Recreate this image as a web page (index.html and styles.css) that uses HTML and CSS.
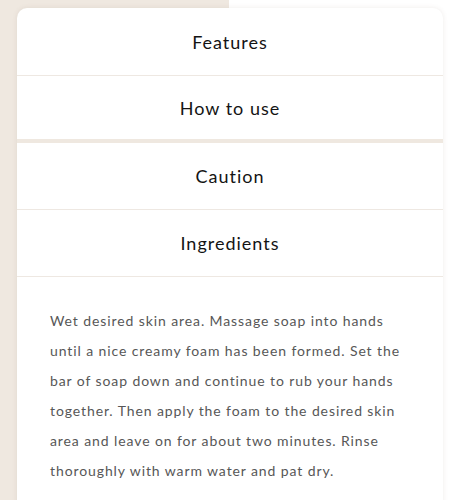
FILE: index.html
```html
<!DOCTYPE html>
<html lang="en">
<head>
<meta charset="utf-8">
<title>Product details</title>
<link rel="stylesheet" href="styles.css">
</head>
<body>
<div class="page">
  <section class="card">
    <div class="tab">Features</div>
    <div class="tab tab-break">How to use</div>
    <div class="tab">Caution</div>
    <div class="tab">Ingredients</div>
    <div class="panel">
      <p>Wet desired skin area. Massage soap into hands until a nice creamy foam has been formed. Set the bar of soap down and continue to rub your hands together. Then apply the foam to the desired skin area and leave on for about two minutes. Rinse thoroughly with warm water and pat dry.</p>
    </div>
  </section>
</div>
</body>
</html>
```
FILE: styles.css
```css
html, body {
  margin: 0;
  padding: 0;
  overflow: hidden;
}
body {
  background: linear-gradient(to right, #efe8e0 0, #efe8e0 229px, #ffffff 229px);
  height: 500px;
  font-family: "Lato", "Liberation Sans", sans-serif;
}
.page {
  padding: 8px 16px 0 17px;
}
.card {
  background: #ffffff;
  border-radius: 10px 10px 0 0;
  box-shadow: 0 0 5px rgba(120, 100, 80, 0.12);
  overflow: hidden;
}
.tab {
  height: 66px;
  display: flex;
  align-items: center;
  justify-content: center;
  border-bottom: 1px solid #eee8e2;
  font-size: 18px;
  color: #141414;
  letter-spacing: 1px;
}
.tab:first-child {
  height: 67px;
}
.tab-break {
  height: 63px;
  border-bottom: 4px solid #efe8e0;
}
.panel {
  padding: 29px 35px 20px 33px;
}
.panel p {
  margin: 0;
  font-size: 14px;
  line-height: 29.9px;
  letter-spacing: 0.9px;
  color: #575757;
}
```
